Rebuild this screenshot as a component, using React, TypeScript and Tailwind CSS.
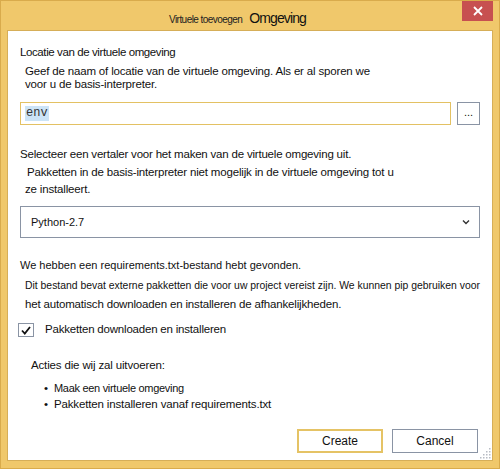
import React from "react";

const font = { fontFamily: '"Liberation Sans", Arial, sans-serif' };

export default function App() {
  return (
    <div
      className="w-[500px] h-[469px] bg-[#f0c86b] border border-[#d9ab4c] flex flex-col text-[#111] overflow-hidden"
      style={font}
    >
      {/* Title bar */}
      <div className="relative h-[29px] shrink-0 flex items-start">
        <div className="flex items-baseline gap-[7px] mt-[7px] pl-[168px] whitespace-nowrap">
          <span className="text-[10px] tracking-[-0.55px] text-[#222]">Virtuele toevoegen</span>
          <span className="text-[14px] tracking-[-0.9px] text-[#111]">Omgeving</span>
        </div>
        <div className="absolute right-[6px] top-0 w-[31px] h-[20px] bg-[#c75050] flex items-center justify-center">
          <svg width="10" height="10" viewBox="0 0 10 10">
            <path d="M1 1 L9 9 M9 1 L1 9" stroke="#fff" strokeWidth="1.8" />
          </svg>
        </div>
      </div>

      {/* Client area */}
      <div className="relative mx-[6px] h-[431px] shrink-0 bg-white border border-[#d6ae58] flex flex-col pl-[12px] pr-[11px] whitespace-nowrap">
        <div className="shrink-0 mt-[13px] text-[11.5px] tracking-[-0.4px] leading-[16px]">
          Locatie van de virtuele omgeving
        </div>
        <div className="shrink-0 mt-[5px] ml-[5px] text-[11.5px] leading-[13px] tracking-[-0.17px]">
          Geef de naam of locatie van de virtuele omgeving. Als er al sporen we
          <br />
          voor u de basis-interpreter.
        </div>

        <div className="shrink-0 mt-[11px] flex gap-[6px]">
          <div className="w-[431px] h-[23px] border border-[#e3c163] flex items-center pl-[4px]">
            <span
              className="bg-[#cce4f7] text-[12px] leading-[15px] px-[1px] text-[#333]"
              style={{ fontFamily: '"Liberation Mono", monospace' }}
            >
              env
            </span>
          </div>
          <div className="w-[23px] h-[23px] border border-[#8a94a4] flex items-center justify-center text-[11px] leading-none pb-[2px]">
            ...
          </div>
        </div>

        <div className="shrink-0 mt-[21px] text-[11.5px] tracking-[-0.2px] leading-[16px]">
          Selecteer een vertaler voor het maken van de virtuele omgeving uit.
        </div>
        <div className="shrink-0 mt-[2px] ml-[5px] text-[11.5px] tracking-[-0.17px] leading-[17px]">
          <span className="ml-[2px]">
            Pakketten in de basis-interpreter niet mogelijk in de virtuele omgeving tot u
          </span>
          <br />
          ze installeert.
        </div>

        <div className="shrink-0 mt-[8px] h-[32px] w-[460px] border border-[#8a94a4] flex items-center justify-between pl-[10px] pr-[9px]">
          <span className="text-[11px]">Python-2.7</span>
          <svg width="8" height="6" viewBox="0 0 8 6">
            <path d="M1 1.5 L4 4.5 L7 1.5" stroke="#333" strokeWidth="1.4" fill="none" />
          </svg>
        </div>

        <div className="shrink-0 mt-[19px] text-[11px] leading-[16px]">
          We hebben een requirements.txt-bestand hebt gevonden.
        </div>
        <div className="shrink-0 mt-[2px] ml-[5px] leading-[17px]">
          <span className="text-[10.4px]">
            Dit bestand bevat externe pakketten die voor uw project vereist zijn. We kunnen pip gebruiken voor
          </span>
          <br />
          <span className="text-[11.5px] tracking-[-0.17px]">
            het automatisch downloaden en installeren de afhankelijkheden.
          </span>
        </div>

        <div className="shrink-0 mt-[9px] flex items-center h-[16px]">
          <div className="ml-[-2px] w-[16px] h-[14px] border border-[#8a94a4] flex items-center justify-center">
            <svg width="10" height="9" viewBox="0 0 10 9">
              <path d="M1 4.5 L3.8 7.5 L9 1" stroke="#111" strokeWidth="1.8" fill="none" />
            </svg>
          </div>
          <span className="ml-[11px] text-[11.5px] tracking-[-0.2px]">
            Pakketten downloaden en installeren
          </span>
        </div>

        <div className="shrink-0 mt-[19px] ml-[11px] text-[11.5px] tracking-[-0.15px] leading-[16px]">
          Acties die wij zal uitvoeren:
        </div>
        <div className="shrink-0 mt-[7px] ml-[24px] text-[11.5px] leading-[16px] flex flex-col">
          <div className="flex">
            <span className="w-[10px]">•</span>
            <span className="text-[11px] tracking-[-0.3px]">Maak een virtuele omgeving</span>
          </div>
          <div className="flex">
            <span className="w-[10px]">•</span>
            <span className="tracking-[-0.15px]">Pakketten installeren vanaf requirements.txt</span>
          </div>
        </div>

        <div className="shrink-0 mt-[17px] flex justify-end gap-[9px] pr-[3px]">
          <div className="w-[86px] h-[24px] border-2 border-[#e5c365] flex items-center justify-center text-[12px]">
            Create
          </div>
          <div className="w-[86px] h-[24px] border border-[#8a94a4] flex items-center justify-center text-[12px]">
            Cancel
          </div>
        </div>

        <svg className="absolute right-[1px] bottom-[1px]" width="11" height="11" viewBox="0 0 11 11">
          {[
            [9, 1], [9, 4], [6, 4], [9, 7], [6, 7], [3, 7], [9, 10], [6, 10], [3, 10], [0, 10],
          ].map(([x, y], i) => (
            <rect key={i} x={x} y={y - 1} width="1.5" height="1.5" fill="#b8bcc4" />
          ))}
        </svg>
      </div>
    </div>
  );
}
